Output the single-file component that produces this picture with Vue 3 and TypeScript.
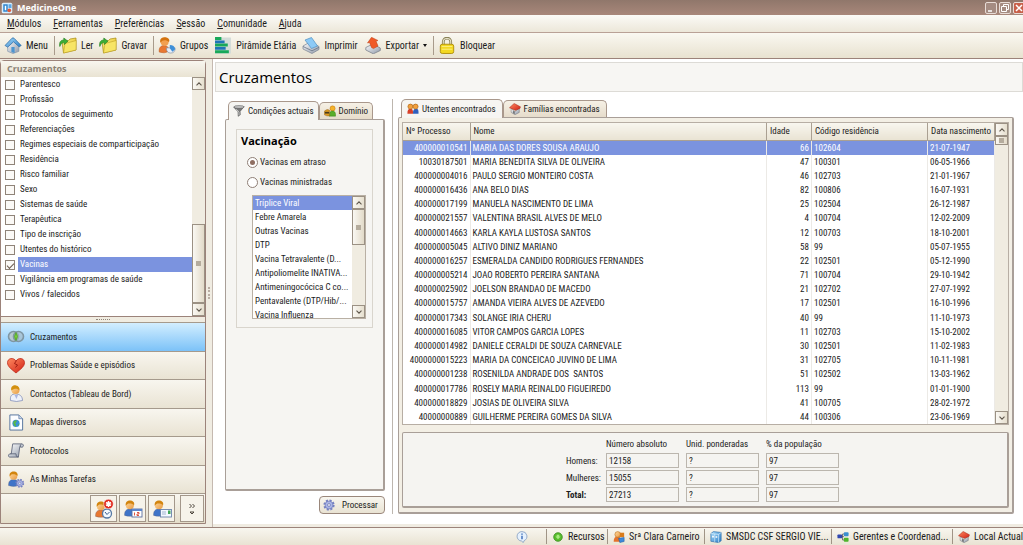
<script setup lang="ts">
import { ref } from 'vue'

interface Patient { id: string; name: string; age: number; code: string; birth: string }

const menus = ['Módulos', 'Ferramentas', 'Preferências', 'Sessão', 'Comunidade', 'Ajuda']

const tools = [
  { label: 'Menu', icon: 'house', sep: true },
  { label: 'Ler', icon: 'folder', sep: false },
  { label: 'Gravar', icon: 'folder', sep: true },
  { label: 'Grupos', icon: 'group', sep: false },
  { label: 'Pirâmide Etária', icon: 'pyramid', sep: false },
  { label: 'Imprimir', icon: 'printer', sep: false },
  { label: 'Exportar', icon: 'export', sep: true, drop: true },
  { label: 'Bloquear', icon: 'lock', sep: false },
]

const criteria = ref([
  'Parentesco', 'Profissão', 'Protocolos de seguimento', 'Referenciações',
  'Regimes especiais de comparticipação', 'Residência', 'Risco familiar', 'Sexo',
  'Sistemas de saúde', 'Terapêutica', 'Tipo de inscrição', 'Utentes do histórico',
  'Vacinas', 'Vigilância em programas de saúde', 'Vivos / falecidos',
].map((label) => ({ label, checked: label === 'Vacinas' })))

const sections = [
  { label: 'Cruzamentos', icon: 'rings' },
  { label: 'Problemas Saúde e episódios', icon: 'heart' },
  { label: 'Contactos (Tableau de Bord)', icon: 'doctor' },
  { label: 'Mapas diversos', icon: 'map' },
  { label: 'Protocolos', icon: 'scroll' },
  { label: 'As Minhas Tarefas', icon: 'tasks' },
]

const shortcuts = [
  { label: 'Consultas', icon: 'userclock' },
  { label: 'Agenda', icon: 'usercal' },
  { label: 'Contactos', icon: 'usercard' },
]

const vaccines = [
  'Tríplice Viral', 'Febre Amarela', 'Outras Vacinas', 'DTP', 'Vacina Tetravalente (D...',
  'Antipoliomelite INATIVA...', 'Antimeningocócica C co...', 'Pentavalente (DTP/Hib/...', 'Vacina Influenza',
]
const mode = ref('atraso')
const selectedVaccine = ref(0)
const selectedRow = ref(0)

const p = (id: string, name: string, age: number, code: string, birth: string): Patient => ({ id, name, age, code, birth })
const patients: Patient[] = [
  p('400000010541', 'MARIA DAS DORES SOUSA ARAUJO', 66, '102604', '21-07-1947'),
  p('10030187501', 'MARIA BENEDITA SILVA DE OLIVEIRA', 47, '100301', '06-05-1966'),
  p('400000004016', 'PAULO SERGIO MONTEIRO COSTA', 46, '102703', '21-01-1967'),
  p('400000016436', 'ANA BELO DIAS', 82, '100806', '16-07-1931'),
  p('400000017199', 'MANUELA NASCIMENTO DE LIMA', 25, '102504', '26-12-1987'),
  p('400000021557', 'VALENTINA BRASIL ALVES DE MELO', 4, '100704', '12-02-2009'),
  p('400000014663', 'KARLA KAYLA LUSTOSA SANTOS', 12, '100703', '18-10-2001'),
  p('400000005045', 'ALTIVO DINIZ MARIANO', 58, '99', '05-07-1955'),
  p('400000016257', 'ESMERALDA CANDIDO RODRIGUES FERNANDES', 22, '102501', '05-12-1990'),
  p('400000005214', 'JOAO ROBERTO PEREIRA SANTANA', 71, '100704', '29-10-1942'),
  p('400000025902', 'JOELSON BRANDAO DE MACEDO', 21, '102702', '27-07-1992'),
  p('400000015757', 'AMANDA VIEIRA ALVES DE AZEVEDO', 17, '102501', '16-10-1996'),
  p('400000017343', 'SOLANGE IRIA CHERU', 40, '99', '11-10-1973'),
  p('400000016085', 'VITOR CAMPOS GARCIA LOPES', 11, '102703', '15-10-2002'),
  p('400000014982', 'DANIELE CERALDI DE SOUZA CARNEVALE', 30, '102501', '11-02-1983'),
  p('4000000015223', 'MARIA DA CONCEICAO JUVINO DE LIMA', 31, '102705', '10-11-1981'),
  p('400000001238', 'ROSENILDA ANDRADE DOS  SANTOS', 51, '102502', '13-03-1962'),
  p('400000017786', 'ROSELY MARIA REINALDO FIGUEIREDO', 113, '99', '01-01-1900'),
  p('400000018829', 'JOSIAS DE OLIVEIRA SILVA', 41, '100705', '28-02-1972'),
  p('40000000889', 'GUILHERME PEREIRA GOMES DA SILVA', 44, '100306', '23-06-1969'),
]

const totals = [
  { label: 'Homens:', values: ['12158', '?', '97'] },
  { label: 'Mulheres:', values: ['15055', '?', '97'] },
  { label: 'Total:', values: ['27213', '?', '97'] },
]
const totalHeads = ['Número absoluto', 'Unid. ponderadas', '% da população']

const status = [
  { label: 'Recursos', icon: 'green', cls: 's1' },
  { label: 'Srª Clara Carneiro', icon: 'userblue', cls: 's2' },
  { label: 'SMSDC CSF SERGIO VIE...', icon: 'server', cls: 's3' },
  { label: 'Gerentes e Coordenad...', icon: 'tree', cls: 's4' },
  { label: 'Local Actual', icon: 'redhouse', cls: 's5' },
]
</script>

<template>
  <div class="app">
    <svg class="defs" aria-hidden="true">
      <defs>
        <linearGradient id="g-blue" x1="0" y1="0" x2="1" y2="1"><stop offset="0" stop-color="#a8dcfa" /><stop offset="1" stop-color="#2d7fc8" /></linearGradient>
        <linearGradient id="g-gold" x1="0" y1="0" x2="1" y2="1"><stop offset="0" stop-color="#fff59a" /><stop offset="1" stop-color="#e0b400" /></linearGradient>
        <linearGradient id="g-grey" x1="0" y1="0" x2="1" y2="1"><stop offset="0" stop-color="#ffffff" /><stop offset="1" stop-color="#8e98a8" /></linearGradient>
        <linearGradient id="g-red" x1="0" y1="0" x2="1" y2="1"><stop offset="0" stop-color="#ff8a60" /><stop offset="1" stop-color="#d02015" /></linearGradient>
        <linearGradient id="g-skin" x1="0" y1="0" x2="1" y2="1"><stop offset="0" stop-color="#ffd9a0" /><stop offset="1" stop-color="#e89a40" /></linearGradient>
      </defs>
      <symbol id="i-person" viewBox="0 0 16 16">
        <path d="M1 14.500c-.3-4 1.600-6 5-6s5.300 2 5 6q-5 1.800-10 0z" fill="currentColor" stroke="#5a5a70" stroke-opacity=".5" stroke-width=".6" />
        <circle cx="6" cy="5" r="3.800" fill="url(#g-skin)" />
        <path d="M2.200 5.500C1.300 1.300 4.500.1 7 .5s3.700 2.500 2.900 4.500C8.800 3.300 6.500 3 4.500 3.300 3.500 3.700 3 4.500 2.200 5.500z" fill="#d2850f" />
      </symbol>
      <symbol id="i-app" viewBox="0 0 16 16"><rect x="1" y="1" width="14" height="14" rx="2" fill="#d9efff" /><path d="M3 3h6v10H3z" fill="#2f86cf" /><path d="M10 3h4v5h-4z" fill="#5aa8e6" /><circle cx="11" cy="11" r="2.500" fill="#e05a3a" /><path d="M5 5h2v6H5z" fill="#fff" /></symbol>
      <symbol id="i-house" viewBox="0 0 16 16"><path d="M3 7.500v6l5 2 5.500-2V7L8 3z" fill="url(#g-grey)" stroke="#7890a8" stroke-width=".6" /><path d="M.5 8 7 1.200q1-.8 2 0L15.700 8l-1.900 1.200L8.500 4.500 3 9.500z" fill="url(#g-blue)" stroke="#2a6aa5" stroke-width=".7" /><path d="M6.500 9.500h3v5.600l-3-.9z" fill="#4c95d0" /></symbol>
      <symbol id="i-folder" viewBox="0 0 18 17"><path d="M3 4.500 9.500 3.500l1.500-1.500L17 1v12L4.500 16z" fill="url(#g-gold)" stroke="#a88a10" stroke-width=".7" /><path d="M4.500 16 6 6.500 17.300 3.500 17 13z" fill="#f7e565" stroke="#b79a20" stroke-width=".5" /><path d="M.8 9.500C-.2 5 2 3 4.800 3V1L9 4.200 5.300 7.600V5.600C3.500 5.400 2 6.500.8 9.500z" fill="#3cae35" stroke="#23801f" stroke-width=".6" /></symbol>
      <symbol id="i-group" viewBox="0 0 18 18"><path d="M.8 16c-.6-4.500 1.500-7 5.200-7s5 2.500 5 6q-5 3-10.200 1z" fill="#e87832" stroke="#b14f16" stroke-width=".5" /><circle cx="6.500" cy="5" r="4.300" fill="#f2a050" /><path d="M2 6C.8 1.500 4-.2 7.500.3s4.800 3 3.500 5C9 3.200 6 3 4 4z" fill="#d4730f" /><path d="M8.500 11.500h9c.5 3.500-1.500 5.500-4.500 5.500s-5-2-4.500-5.500z" fill="#e8eef8" stroke="#6f8299" stroke-width=".6" /><path d="M12 12V8.500q5 0 5.700 4.500l-3 2.500z" fill="#3e8fd8" /></symbol>
      <symbol id="i-pyramid" viewBox="0 0 16 16"><rect x=".5" y=".5" width="15" height="15" fill="#d3dcd8" /><path d="M.5 0h6v2.800h-6zM.5 6.200h12V9H.5zM.5 12.500h13v2.800H.5z" fill="#18a85a" /><path d="M.5 3.200h9v2.600h-9zM.5 9.300h10v2.600H.5z" fill="#1f74b8" /></symbol>
      <symbol id="i-printer" viewBox="0 0 18 17"><path d="m1 9 7-4 9 4.500v3L10 16.500 1 12z" fill="url(#g-grey)" stroke="#788392" stroke-width=".7" /><path d="m3 3 6.500-2.500L15.500 9l-6 2.500z" fill="#8ccaf6" stroke="#4f8fc0" stroke-width=".7" /><path d="m1 9.500 9 4.300 7-3.500" fill="none" stroke="#687585" stroke-width=".8" /></symbol>
      <symbol id="i-export" viewBox="0 0 16 17"><path d="m.8 10.500 7-3.500 7.500 4v2.500l-7 3.300-7.500-3.800z" fill="url(#g-grey)" stroke="#737884" stroke-width=".7" /><path d="M6.500 10.500 4.500 5.500 2.500 6 6.500.3 13 3.500l-2 .6 2 5-4.500 2.500z" fill="#f05a28" stroke="#bd3a10" stroke-width=".5" /></symbol>
      <symbol id="i-lock" viewBox="0 0 14 16"><path d="M3.500 8V4.500C3.500-.2 10.500-.2 10.500 4.500V8" fill="none" stroke="#8a8258" stroke-width="2.600" /><path d="M3.500 8V4.500C3.500.3 10.500.3 10.500 4.500V8" fill="none" stroke="#e9e6cc" stroke-width="1" /><rect x=".7" y="6.800" width="12.600" height="8.700" rx="1.800" fill="#f3d820" stroke="#a98600" stroke-width=".8" /><path d="M2 9h10M2 11.500h10" stroke="#fff6a0" stroke-width=".7" /></symbol>
      <symbol id="i-rings" viewBox="0 0 18 14"><circle cx="6.500" cy="7" r="5" fill="#b9c9d2" stroke="#7f96a3" stroke-width="1.600" /><circle cx="11.500" cy="7" r="5" fill="#a9b9c1" fill-opacity=".6" stroke="#7f96a3" stroke-width="1.600" /><path d="M9 3q3 4 0 8-3-4 0-8z" fill="#76cf3a" stroke="#4d9a25" stroke-width=".7" /></symbol>
      <symbol id="i-heart" viewBox="0 0 18 16"><path d="M9 15.500C4 11.500.5 8.800.5 5.200.5.500 6.500-.5 9 3.500 11.500-.5 17.500.500 17.500 5.200 17.500 8.800 14 11.500 9 15.500z" fill="url(#g-red)" stroke="#b81a0c" stroke-width=".7" /><path d="m9.500 3-2 3 3 1.500-2 2.500" fill="none" stroke="#8e0f08" stroke-width=".8" /></symbol>
      <symbol id="i-doctor" viewBox="0 0 16 17"><path d="M2.500 15.500c-.5-4.500 1-6.500 5-6.500s7 2 7 6.500q-6 2-12 0z" fill="#eef1fa" stroke="#7482b0" stroke-width=".7" /><path d="m6.500 10 2 4 1.500-4" fill="#a9b5e0" /><circle cx="7.500" cy="5" r="4" fill="url(#g-skin)" /><path d="M3.300 5.500C2.500 1.200 5.500 0 8 .4s4 2.600 3.200 5.100C10 3.300 6.300 3.300 3.300 5.500z" fill="#d2900f" /></symbol>
      <symbol id="i-map" viewBox="0 0 16 18"><path d="M1.500 1h9.500L15 5v12H1.500z" fill="#fcfdff" stroke="#52719c" stroke-width="1" /><path d="M11 1v4h4" fill="#c8d6ea" stroke="#52719c" stroke-width=".7" /><circle cx="8" cy="10" r="3.800" fill="#3b91d6" /><path d="M5 8.500q2-3 4-1.500-.5 2-2 3 2 1 .5 3.500Q5 12 5 8.500zM10 11l1.500-1-.5 2.500z" fill="#58b848" /></symbol>
      <symbol id="i-scroll" viewBox="0 0 18 18"><path d="M5.500 2h9.500c2.800 0 2.300 4-.5 3.500L13 5 11.500 16H2.500C.3 16 .6 12.500 3 12.500h1z" fill="url(#g-grey)" stroke="#5b6378" stroke-width=".9" /><path d="M3 12.500h6q-.5 3.500 2.500 3.500M15 2q-2 .5-1.500 3.300" fill="none" stroke="#5b6378" stroke-width=".9" /></symbol>
      <symbol id="i-gear" viewBox="0 0 16 16"><circle cx="8" cy="8" r="6" fill="none" stroke="#7581c2" stroke-width="3" stroke-dasharray="2.700 2" /><circle cx="8" cy="8" r="5.300" fill="#a9b4e6" stroke="#6470b0" stroke-width=".8" /><circle cx="8" cy="8" r="1.900" fill="#f3f3fa" stroke="#5863a0" stroke-width=".8" /></symbol>
      <symbol id="i-tasks" viewBox="0 0 18 18"><use href="#i-person" x="0" y="0" width="17" height="17" color="#3f74c8" /><use href="#i-gear" x="8" y="8" width="10" height="10" /></symbol>
      <symbol id="i-userclock" viewBox="0 0 20 20"><use href="#i-person" x="0" y="2" width="18" height="17" color="#e87832" /><circle cx="13" cy="14.500" r="4.500" fill="#f4faff" stroke="#5679a5" stroke-width="1.300" /><path d="m11 13 2 2.500 2.500-2.500" fill="none" stroke="#355c90" stroke-width="1" /><circle cx="14.500" cy="5" r="4.800" fill="#e02a1e" stroke="#fff" stroke-width=".5" /><path d="M14.500 2v6M12 3.500l5 3M17 3.500l-5 3" stroke="#fff" stroke-width="1.500" /></symbol>
      <symbol id="i-usercal" viewBox="0 0 20 20"><use href="#i-person" x="0" y="1" width="18" height="17" color="#3f74c8" /><rect x="9" y="10" width="10" height="8" fill="#fff" stroke="#5b6fa0" stroke-width=".9" /><path d="M9 10h10v2H9z" fill="#5c86cc" /><path d="M11.500 13.500v3M14 13.500h2v1.500h-2v1.500h2" stroke="#d8432c" fill="none" stroke-width=".9" /></symbol>
      <symbol id="i-usercard" viewBox="0 0 20 20"><use href="#i-person" x="0" y="1" width="18" height="17" color="#3f74c8" /><rect x="8.500" y="10.500" width="11" height="7.500" fill="#f3f8ff" stroke="#6b84ac" stroke-width=".9" /><path d="M10 13h4M10 15h4" stroke="#8ea3c4" stroke-width=".8" /><path d="M16 11.500h2.500V15H16z" fill="#3fa757" /></symbol>
      <symbol id="i-funnel" viewBox="0 0 14 14"><path d="m.8 2.500 5 5.300.2 5.400 2.500-1.700-.2-4L13 1.800z" fill="#777" stroke="#484848" stroke-width=".6" /><ellipse cx="7" cy="2.300" rx="6" ry="1.600" fill="#c8c8c8" stroke="#4a4a4a" stroke-width=".6" /><path d="M3.500 5 7 8v4" fill="none" stroke="#e4e4e4" stroke-width=".9" /></symbol>
      <symbol id="i-domain" viewBox="0 0 14 14"><circle cx="10" cy="4" r="3" fill="#f4b22a" stroke="#b96d08" stroke-width=".5" /><path d="M5.800 13c0-4 1.700-6 4-6s4 1.500 3.700 6z" fill="#59ad2b" stroke="#2f7a14" stroke-width=".5" /><path d="M.5 7q3-3 6-1v6.500q-3 1-6-1z" fill="#dc9b22" stroke="#8b5410" stroke-width=".5" /><path d="M1 8h5v2H1z" fill="#4b3b1c" /></symbol>
      <symbol id="i-users" viewBox="0 0 14 14"><path d="M.5 12.500c-.2-4 1-5.800 3.400-5.800s3.300 1.300 3.100 5.800z" fill="#d8402a" /><path d="M7 12.500c-.2-4 1-5.800 3.400-5.800s3.200 1.300 3 5.800z" fill="#2f5fbe" /><circle cx="4" cy="4.200" r="2.900" fill="#f2a03c" stroke="#b0640e" stroke-width=".8" /><circle cx="10" cy="4.200" r="2.900" fill="#f2a03c" stroke="#b0640e" stroke-width=".8" /></symbol>
      <symbol id="i-redhouse" viewBox="0 0 14 14"><path d="M2.500 6.500 7 10l5-4v5L7 13.600 2.500 11z" fill="url(#g-grey)" stroke="#777" stroke-width=".6" /><path d="M.6 5.500 6 .6l7.400 3.900-.8 2L7.500 8.500z" fill="url(#g-red)" stroke="#a52012" stroke-width=".6" /><path d="M5 9v3l1.500.8V10z" fill="#565656" /></symbol>
      <symbol id="i-green" viewBox="0 0 14 14"><circle cx="7" cy="7" r="5" fill="#58bd2d" stroke="#36871a" stroke-width=".9" /><path d="M5.500 4.500h3v2h1.500L7 9.500 4 6.500h1.500z" fill="#a8ec7e" /></symbol>
      <symbol id="i-userblue" viewBox="0 0 14 14"><path d="M.8 12.500c-.2-4 1.500-6 4.500-6s4 2 4 6z" fill="#e4722c" /><circle cx="5.500" cy="4" r="3.300" fill="url(#g-skin)" stroke="#b0640e" stroke-width=".6" /><path d="M8 2h5v5H8z" fill="#d97c1b" /><path d="M6.500 8.500 13 7.500v4.700l-5 1.300z" fill="#3d8bdc" stroke="#23579a" stroke-width=".6" /></symbol>
      <symbol id="i-server" viewBox="0 0 14 14"><path d="m1 3 3-2.300 9 1v9.800l-3 2-9-1.500z" fill="url(#g-blue)" stroke="#1f62a2" stroke-width=".7" /><path d="M5.500 3.500v9.300M1 3l9 1 3-2.300M10 4v9.500" stroke="#eaf6ff" stroke-width=".7" fill="none" /><path d="M2.500 5.500h2v2h-2zM6.500 6h2v2h-2z" fill="#fff" /></symbol>
      <symbol id="i-tree" viewBox="0 0 14 14"><path d="M4 6.500h4M6.500 3.500v7h3M6.500 3.500h3" fill="none" stroke="#555" stroke-width=".9" /><rect x=".5" y="4" width="5.500" height="4.500" rx="1" fill="#3148b0" /><rect x="8" y="1.500" width="5.500" height="4.500" rx="1" fill="#3b8fd0" /><rect x="8" y="8" width="5.500" height="4.500" rx="1" fill="#4fb52c" /></symbol>
      <symbol id="i-info" viewBox="0 0 14 14"><path d="M7 .7a5.500 5.500 0 0 1 2.500 10.500L8.500 13.500 6.500 11.700A5.500 5.500 0 0 1 7 .7z" fill="#e6f1fd" stroke="#7d98bd" stroke-width=".9" /><path d="M7 5.500v4M7 3v1.400" stroke="#275db2" stroke-width="1.500" /></symbol>
      <symbol id="i-up" viewBox="0 0 8 8"><path d="m1.500 5.300 2.500-2.500 2.500 2.500" fill="none" stroke="#5f574c" stroke-width="1.100" /></symbol>
      <symbol id="i-down" viewBox="0 0 8 8"><path d="m1.500 2.700 2.500 2.500 2.500-2.500" fill="none" stroke="#5f574c" stroke-width="1.100" /></symbol>
    </svg>

    <header class="titlebar">
      <svg class="ic12"><use href="#i-app" /></svg>
      <span class="title">MedicineOne</span>
      <button class="win" aria-label="Minimizar"><svg viewBox="0 0 10 10"><path d="M2 8h4" stroke="#fff" stroke-width="1.500" /></svg></button>
      <button class="win" aria-label="Restaurar"><svg viewBox="0 0 10 10"><path d="M3.500 3.500v-2h5v5h-2M1.500 3.500h5v5h-5z" fill="none" stroke="#fff" /></svg></button>
      <button class="win close" aria-label="Fechar"><svg viewBox="0 0 10 10"><path d="m2 2 6 6M8 2 2 8" stroke="#fff" stroke-width="1.500" /></svg></button>
    </header>

    <nav class="menubar">
      <button v-for="m in menus" :key="m"><u>{{ m[0] }}</u>{{ m.slice(1) }}</button>
    </nav>

    <div class="toolbar">
      <template v-for="t in tools" :key="t.label">
        <button><svg class="ic18"><use :href="'#i-' + t.icon" /></svg><span>{{ t.label }}</span><i v-if="t.drop" class="caret"></i></button>
        <span v-if="t.sep" class="tsep"></span>
      </template>
    </div>

    <div class="body">
      <aside class="sidebar">
        <h2 class="side-title">Cruzamentos</h2>
        <div class="side-list">
          <div class="checks">
            <label v-for="c in criteria" :key="c.label" :class="{ on: c.checked }">
              <input v-model="c.checked" type="checkbox"><span>{{ c.label }}</span>
            </label>
          </div>
          <div class="sbar">
            <button aria-label="Subir"><svg><use href="#i-up" /></svg></button>
            <div class="track low"><div class="thumb"></div></div>
            <button aria-label="Descer"><svg><use href="#i-down" /></svg></button>
          </div>
        </div>
        <div class="grip"><i></i></div>
        <nav class="sections">
          <button v-for="(s, i) in sections" :key="s.label" :class="{ active: i === 0 }">
            <svg class="ic18"><use :href="'#i-' + s.icon" /></svg><span>{{ s.label }}</span>
          </button>
        </nav>
        <div class="shortcuts">
          <button v-for="s in shortcuts" :key="s.icon" :aria-label="s.label"><svg class="ic20"><use :href="'#i-' + s.icon" /></svg></button>
          <button class="more" aria-label="Mais"><svg viewBox="0 0 10 12"><path d="m2.500 1 2 2-2 2M5.500 1l2 2-2 2M3 9l2 2 2-2z" fill="none" stroke="#4b443b" /></svg></button>
        </div>
      </aside>

      <div class="vgrip"><i></i></div>

      <main class="main">
        <h1>Cruzamentos</h1>
        <div class="work">
          <section class="left">
            <div class="tabs">
              <button class="tab active"><svg class="ic12"><use href="#i-funnel" /></svg>Condições actuais</button>
              <button class="tab"><svg class="ic12"><use href="#i-domain" /></svg>Domínio</button>
            </div>
            <div class="panel">
              <div class="group">
                <h3>Vacinação</h3>
                <label class="radio"><input v-model="mode" type="radio" value="atraso" name="mode">Vacinas em atraso</label>
                <label class="radio"><input v-model="mode" type="radio" value="ministradas" name="mode">Vacinas ministradas</label>
                <div class="listbox">
                  <ul role="listbox" aria-label="Vacinas">
                    <li v-for="(v, i) in vaccines" :key="v" role="option" :aria-selected="i === selectedVaccine" :class="{ sel: i === selectedVaccine }" @click="selectedVaccine = i">{{ v }}</li>
                  </ul>
                  <div class="sbar">
                    <button aria-label="Subir"><svg><use href="#i-up" /></svg></button>
                    <div class="track"><div class="thumb"></div></div>
                    <button aria-label="Descer"><svg><use href="#i-down" /></svg></button>
                  </div>
                </div>
              </div>
            </div>
            <button class="process"><svg class="ic12"><use href="#i-gear" /></svg><span>Processar</span></button>
          </section>

          <div class="divider"></div>

          <section class="right">
            <div class="tabs">
              <button class="tab active"><svg class="ic12"><use href="#i-users" /></svg>Utentes encontrados</button>
              <button class="tab"><svg class="ic12"><use href="#i-redhouse" /></svg>Famílias encontradas</button>
            </div>
            <div class="results">
              <div class="grid">
                <table>
                  <colgroup><col class="c1"><col><col class="c3"><col class="c4"><col class="c5"></colgroup>
                  <thead><tr><th>Nº Processo</th><th>Nome</th><th>Idade</th><th>Código residência</th><th>Data nascimento</th></tr></thead>
                  <tbody>
                    <tr v-for="(r, i) in patients" :key="r.id" :class="{ sel: i === selectedRow }" @click="selectedRow = i">
                      <td class="num">{{ r.id }}</td><td>{{ r.name }}</td><td class="num">{{ r.age }}</td><td>{{ r.code }}</td><td>{{ r.birth }}</td>
                    </tr>
                  </tbody>
                </table>
                <div class="sbar">
                  <button aria-label="Subir"><svg><use href="#i-up" /></svg></button>
                  <div class="track"><div class="thumb small"></div></div>
                  <button aria-label="Descer"><svg><use href="#i-down" /></svg></button>
                </div>
              </div>
              <div class="summary">
                <span></span><span v-for="h in totalHeads" :key="h">{{ h }}</span>
                <template v-for="(t, i) in totals" :key="t.label">
                  <label :for="'total-' + i" :class="{ strong: i === 2 }">{{ t.label }}</label>
                  <input v-for="(v, j) in t.values" :id="j === 0 ? 'total-' + i : undefined" :key="j" type="text" readonly :value="v" :aria-label="t.label + ' ' + totalHeads[j]">
                </template>
              </div>
            </div>
          </section>
        </div>
      </main>
    </div>

    <footer class="status">
      <svg class="ic12"><use href="#i-info" /></svg>
      <div v-for="s in status" :key="s.label" class="item" :class="s.cls"><svg class="ic12"><use :href="'#i-' + s.icon" /></svg><span>{{ s.label }}</span></div>
    </footer>
  </div>
</template>

<style>
html, body { margin: 0; background: #f3efe4; }
</style>

<style scoped>
* { box-sizing: border-box; }
.app {
  --brown: #9c837a;
  --cream: linear-gradient(#f8f6ef, #e9e3d3);
  --sel: #7b93df;
  display: flex; flex-direction: column; height: 100vh; min-height: 545px; overflow: hidden;
  background: #f0ece2; color: #1b1b1b;
  font: 9px/14px "Roboto Condensed", "DejaVu Sans Condensed", Roboto, sans-serif;
}
button, input { font: inherit; color: inherit; margin: 0; }
button { border: 0; padding: 0; background: none; white-space: nowrap; }
svg { display: block; flex: none; overflow: visible; }
.defs { position: absolute; width: 0; height: 0; }
.ic12 { width: 12px; height: 12px; }
.ic18 { width: 18px; height: 17px; }
.ic20 { width: 20px; height: 20px; }
ul, h1, h2, h3 { margin: 0; padding: 0; list-style: none; }

.titlebar { display: flex; align-items: center; gap: 4px; flex: none; height: 15px; padding-left: 1px; background: linear-gradient(#90776b, #a8877a); color: #fff; }
.title { flex: 1; font: bold 9px/13px "Open Sans", sans-serif; }
.win { width: 12px; height: 12px; margin-right: -2px; border: 1px solid #e8dcd6; border-radius: 2px; background: #a58c82; }
.win svg { width: 10px; height: 10px; }
.close { background: #c8604a; }

.menubar { display: flex; gap: 12px; flex: none; height: 18px; align-items: center; padding: 0 7px; background: linear-gradient(#fbfaf6, #ece7d9); border-bottom: 1px solid #b9a196; }
.menubar, .toolbar, .status { font-size: 10px; }
.toolbar { display: flex; align-items: center; flex: none; height: 26px; padding: 0 4px; background: linear-gradient(#faf8f1, #e8e2d0); border-bottom: 1px solid var(--brown); }
.toolbar button { display: flex; align-items: center; gap: 4px; margin-right: 6px; }
.tsep { width: 1px; height: 19px; margin-right: 4px; background: #a89b8b; }
.caret { border: 2px solid transparent; border-top: 3px solid #111; border-bottom: 0; }

.body { flex: 1; display: flex; min-height: 0; }
.sidebar { width: 206px; flex: none; display: flex; flex-direction: column; margin: 1px 0 3px; border: 1px solid var(--brown); border-radius: 4px 4px 0 0; background: #f0ece1; }
.side-title { height: 16px; padding-left: 6px; font: bold 9px/16px "Open Sans", sans-serif; color: #8b8275; background: var(--cream); }
.side-list { flex: 1; display: flex; min-height: 0; background: #fff; border-bottom: 1px solid var(--brown); }
.checks { flex: 1; overflow: hidden; }
.checks label { display: flex; align-items: center; height: 15px; padding-left: 4px; gap: 3px; }
.checks span { flex: 1; line-height: 15px; padding-left: 2px; white-space: nowrap; }
.checks .on span { background: var(--sel); color: #fff; }
.checks input { appearance: none; width: 10px; height: 10px; border: 1px solid #8f8378; background: #fbf9f6; display: grid; place-items: center; }
.checks input:checked::after { content: ""; width: 6px; height: 3px; border: solid #6c5c50; border-width: 0 0 1px 1px; transform: rotate(-45deg); }
.sbar { width: 13px; flex: none; display: flex; flex-direction: column; background: #f0ece1; }
.sbar button { height: 13px; border: 1px solid #9b9184; background: linear-gradient(90deg, #faf8f3, #e6dfce); display: grid; place-items: center; }
.sbar svg { width: 8px; height: 8px; }
.track { flex: 1; display: flex; flex-direction: column; }
.track.low { justify-content: flex-end; }
.thumb { height: 36px; border: 1px solid #9b9184; background: linear-gradient(90deg, #faf8f3, #e2dac8); display: grid; place-items: center; }
.low .thumb { height: 79px; }
.thumb.small { height: 9px; }
.thumb::after { content: ""; width: 5px; height: 5px; background: #b5ac9d; }
.grip { height: 5px; display: grid; place-items: center; }
.grip i { width: 14px; border-top: 1px dotted #8f857a; }
.sections { display: flex; flex-direction: column; height: 171px; flex: none; }
.sections button { flex: 1; display: flex; align-items: center; gap: 5px; padding-left: 6px; border-top: 1px solid #a59a8c; background: var(--cream); }
.sections .active { background: linear-gradient(#d2eeff, #7cc2f8); }
.shortcuts { display: flex; justify-content: flex-end; align-items: center; gap: 2px; height: 30px; flex: none; padding-right: 1px; border-top: 1px solid #a59a8c; background: linear-gradient(#f8f6ef, #e4ddca); }
.shortcuts button { width: 27px; height: 27px; border: 1px solid #a3978a; display: grid; place-items: center; background: #f6f3ea; }
.shortcuts .more { width: 24px; margin-left: 3px; }
.more svg { width: 10px; height: 12px; }
.vgrip { width: 7px; flex: none; display: flex; align-items: center; justify-content: center; border-right: 1px solid #c5b9b0; }
.vgrip i { height: 12px; border-left: 2px dotted #b9ada2; }

.main { flex: 1; min-width: 0; display: flex; flex-direction: column; background: #fff; margin-bottom: 3px; padding: 3px 0 0 2px; }
h1 { height: 30px; flex: none; padding-left: 3px; border: 1px solid #dddbd6; background: #f7f6f3; font: 15px/28px "Open Sans", sans-serif; color: #000; }
.work { flex: 1; display: flex; min-height: 0; padding: 7px 9px 10px 10px; }
.left { width: 160px; flex: none; display: flex; flex-direction: column; padding-top: 2px; }
.tabs { display: flex; align-items: flex-end; padding-left: 3px; flex: none; }
.tab { display: flex; align-items: center; gap: 3px; height: 17px; padding: 0 6px 0 5px; border: 1px solid #a9988c; border-bottom: 0; border-radius: 5px 5px 0 0; background: linear-gradient(#f6f1e6, #e6dccb); }
.left .tab { padding: 0 4px; }
.tab.active { height: 19px; margin-bottom: -1px; background: #f6f5f2; position: relative; }
.panel { flex: 1; padding: 9px 10px; border: 2px solid #a99f98; border-width: 1px 2px 2px 1px; border-radius: 2px; background: #f6f5f2; }
.group { padding: 3px 4px 8px; border: 1px solid #d9d5cd; }
h3 { font: bold 11px/16px "Open Sans", sans-serif; color: #000; margin-bottom: 3px; }
.radio { display: flex; align-items: center; gap: 2px; height: 20px; padding-left: 6px; }
.radio input { appearance: none; width: 11px; height: 11px; border: 1px solid #8f7f76; border-radius: 50%; background: #fff; display: grid; place-items: center; }
.radio input:checked::after { content: ""; width: 5px; height: 5px; border-radius: 50%; background: #8f6f62; }
.listbox { display: flex; height: 124px; margin: 3px 2px 0 11px; border: 1px solid #b9b0a4; background: #fff; }
.listbox ul { flex: 1; overflow: hidden; }
.listbox li { height: 14px; padding-left: 2px; white-space: nowrap; }
.sel { background: var(--sel); color: #fff; }
.process { display: flex; align-items: center; align-self: flex-end; gap: 7px; height: 18px; width: 66px; padding-left: 3px; margin: 5px 0 0; border: 1px solid #9a877b; border-radius: 4px; background: var(--cream); }
.divider { width: 1px; flex: none; margin: 0 5px 0 7px; background: #bdb6ae; }
.right { flex: 1; min-width: 0; display: flex; flex-direction: column; }
.results { flex: 1; display: flex; flex-direction: column; gap: 7px; padding: 4px 3px; border: 1px solid #a99f98; border-width: 1px 2px 2px 1px; border-radius: 2px; background: #f3efe5; min-height: 0; }
.grid { flex: 1; display: flex; min-height: 0; border: 1px solid #b7aea4; background: #fff; }
table { flex: 1; width: 100%; height: 100%; table-layout: fixed; border-collapse: collapse; }
.c1 { width: 67px; } .c3 { width: 45px; } .c4 { width: 116px; } .c5 { width: 67px; }
th { height: 17px; padding: 0 3px; text-align: left; font-weight: normal; white-space: nowrap; background: var(--cream); border: 1px solid #aaa092; border-width: 0 1px 1px 0; }
td { padding: 1px 2px 0; white-space: pre; line-height: 13px; border-right: 1px solid #eceae6; overflow: hidden; }
.num { text-align: right; }
.summary { display: grid; grid-template-columns: 33px repeat(3, 73px); gap: 2px 7px; height: 76px; flex: none; padding: 4px 0 0 163px; align-content: start; align-items: center; border: 1px solid #a99f98; border-width: 1px 2px 2px 1px; border-radius: 2px; background: #f5f4f1; white-space: nowrap; }
.summary input { width: 100%; height: 15px; border: 1px solid #bbb6ae; padding: 0 2px; background: #f5f4f1; }
.strong { font-weight: bold; }

.status { display: flex; align-items: center; justify-content: flex-end; flex: none; height: 18px; border-top: 1px solid var(--brown); background: var(--cream); }
.status > svg { margin-right: 18px; }
.item { display: flex; align-items: center; gap: 4px; height: 15px; padding-left: 5px; border-left: 1px solid #a09486; white-space: nowrap; }
.s1 { width: 61px; } .s2 { width: 97px; } .s3 { width: 127px; } .s4 { width: 121px; } .s5 { width: 71px; }
</style>
